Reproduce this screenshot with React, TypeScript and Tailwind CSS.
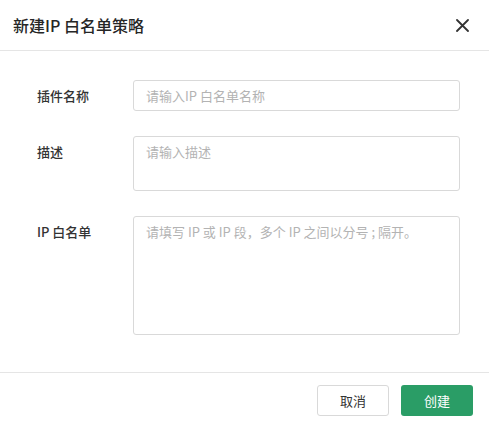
import React from 'react';

const font = { fontFamily: '"Noto Sans CJK SC", "Noto Sans", sans-serif' };

const Field: React.FC<{ label: string; children: React.ReactNode }> = ({ label, children }) => (
    <div className="flex items-start">
        <label className="w-[133px] shrink-0 pl-[37px] leading-[31px] text-[13px] font-medium text-[#333]">
            {label}
        </label>
        <div className="flex-1">{children}</div>
    </div>
);

export default function App() {
    return (
        <div className="w-[489px] h-[425px] bg-white flex flex-col" style={font}>
            <div className="h-[51px] flex items-center justify-between px-[13px] border-b border-[#e5e5e5] shrink-0">
                <h2 className="text-[16px] text-[#262626] font-medium">新建IP 白名单策略</h2>
                <button className="w-[24px] h-[24px] flex items-center justify-center text-[#333] mr-[2px]">
                    <svg width="13" height="13" viewBox="0 0 13 13" fill="none" stroke="currentColor" strokeWidth="1.8" strokeLinecap="round">
                        <path d="M1 1L12 12M12 1L1 12" />
                    </svg>
                </button>
            </div>

            <div className="flex-1 flex flex-col gap-[25px] pt-[29px] pr-[29px]">
                <Field label="插件名称">
                    <input
                        className="w-full h-[31px] border border-[#d9d9d9] rounded-[3px] px-[12px] text-[13px] outline-none placeholder:text-[#b3b3b3]"
                        placeholder="请输入IP 白名单名称"
                    />
                </Field>
                <Field label="描述">
                    <textarea
                        className="block w-full h-[55px] border border-[#d9d9d9] rounded-[3px] px-[12px] py-[5px] text-[13px] outline-none resize-none placeholder:text-[#b3b3b3]"
                        placeholder="请输入描述"
                    />
                </Field>
                <Field label="IP 白名单">
                    <textarea
                        className="block w-full h-[119px] border border-[#d9d9d9] rounded-[3px] px-[12px] py-[5px] text-[13px] outline-none resize-none placeholder:text-[#b3b3b3]"
                        placeholder="请填写 IP 或 IP 段，多个 IP 之间以分号 ; 隔开。"
                    />
                </Field>
            </div>

            <div className="h-[53px] shrink-0 border-t border-[#e5e5e5] flex items-start justify-end gap-[12px] pt-[12px] pr-[16px]">
                <button className="w-[72px] h-[31px] border border-[#d9d9d9] rounded-[3px] text-[13px] text-[#333] bg-white">
                    取消
                </button>
                <button className="w-[72px] h-[31px] rounded-[3px] text-[13px] text-white bg-[#2a9d66]">
                    创建
                </button>
            </div>
        </div>
    );
}
